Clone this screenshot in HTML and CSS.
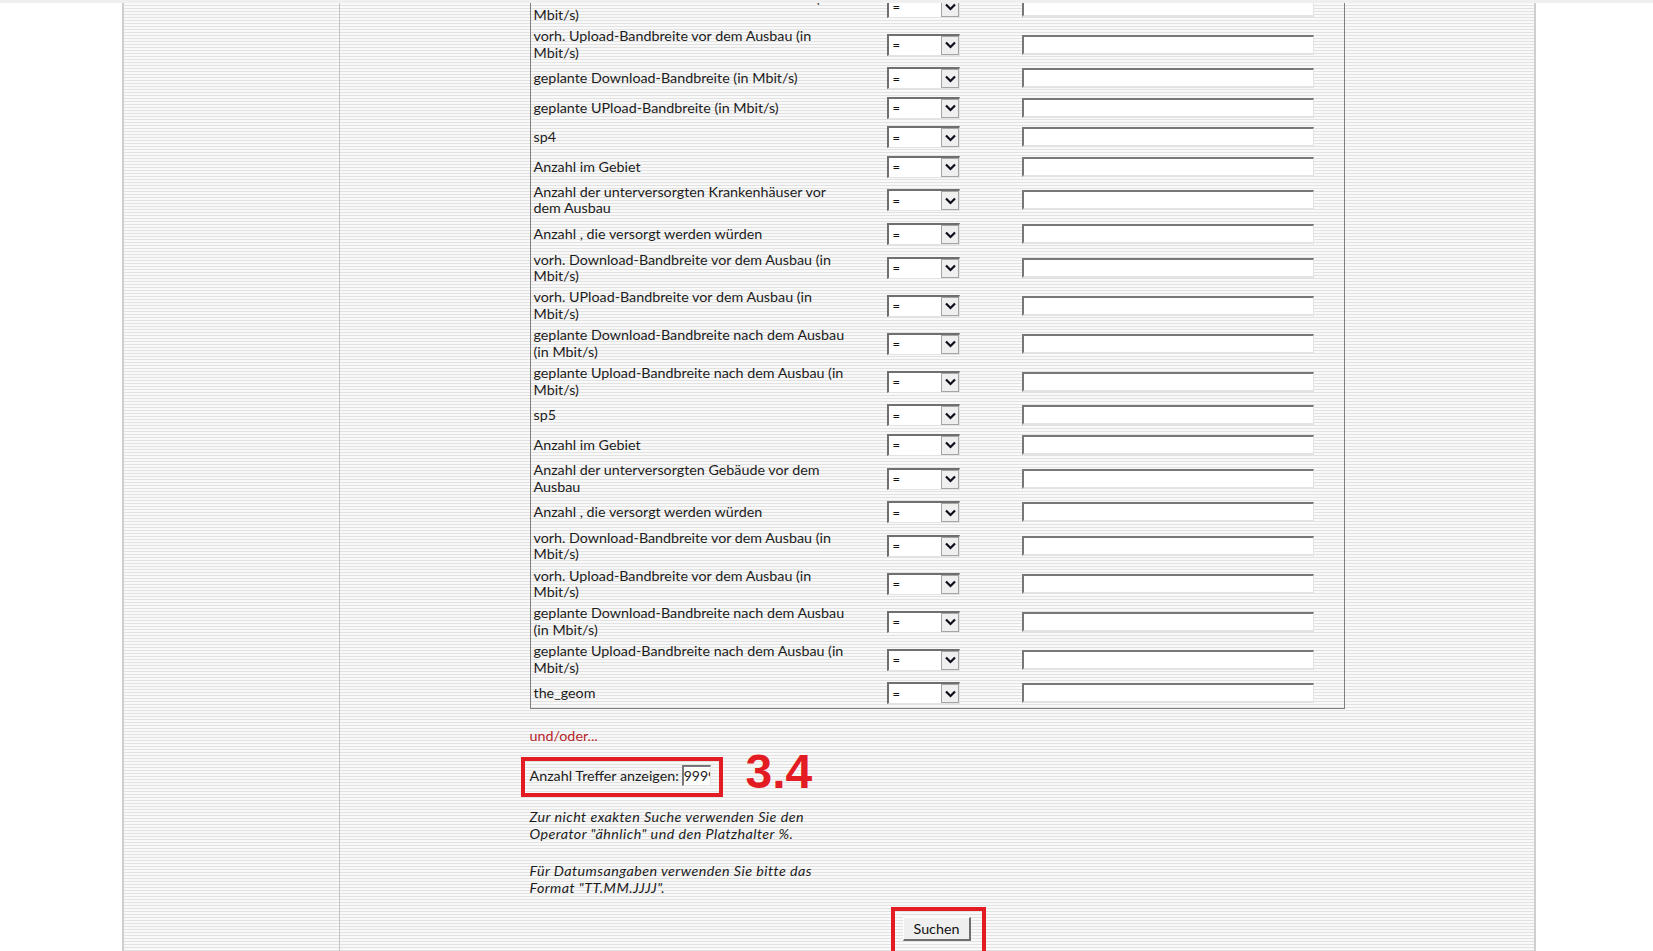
FILE: index.html
```html
<!DOCTYPE html>
<html lang="de">
<head>
<meta charset="utf-8">
<title>Suche</title>
<link rel="stylesheet" href="styles.css">
</head>
<body>
<div class="topbar"></div>
<div class="viewport">
  <div class="page">
    <aside class="sidebar"></aside>
    <main class="main">
      <form class="content">
        <table class="crit">
          <colgroup><col class="c-lbl"><col class="c-op"><col class="c-val"></colgroup>
          <tbody>
            <tr><td class="lbl">vorh. Download-Bandbreite vor dem Ausbau (in<br>Mbit/s)</td><td class="op"><span class="sel"><select><option>=</option></select><span class="arr"><svg width="11" height="8" viewBox="0 0 11 8"><path d="M1 1.5 L5.5 6 L10 1.5" fill="none" stroke="#0d0d1a" stroke-width="2.2"/></svg></span></span></td><td class="val"><input type="text"></td></tr>
            <tr><td class="lbl">vorh. Upload-Bandbreite vor dem Ausbau (in<br>Mbit/s)</td><td class="op"><span class="sel"><select><option>=</option></select><span class="arr"><svg width="11" height="8" viewBox="0 0 11 8"><path d="M1 1.5 L5.5 6 L10 1.5" fill="none" stroke="#0d0d1a" stroke-width="2.2"/></svg></span></span></td><td class="val"><input type="text"></td></tr>
            <tr><td class="lbl">geplante Download-Bandbreite (in Mbit/s)</td><td class="op"><span class="sel"><select><option>=</option></select><span class="arr"><svg width="11" height="8" viewBox="0 0 11 8"><path d="M1 1.5 L5.5 6 L10 1.5" fill="none" stroke="#0d0d1a" stroke-width="2.2"/></svg></span></span></td><td class="val"><input type="text"></td></tr>
            <tr><td class="lbl">geplante UPload-Bandbreite (in Mbit/s)</td><td class="op"><span class="sel"><select><option>=</option></select><span class="arr"><svg width="11" height="8" viewBox="0 0 11 8"><path d="M1 1.5 L5.5 6 L10 1.5" fill="none" stroke="#0d0d1a" stroke-width="2.2"/></svg></span></span></td><td class="val"><input type="text"></td></tr>
            <tr><td class="lbl">sp4</td><td class="op"><span class="sel"><select><option>=</option></select><span class="arr"><svg width="11" height="8" viewBox="0 0 11 8"><path d="M1 1.5 L5.5 6 L10 1.5" fill="none" stroke="#0d0d1a" stroke-width="2.2"/></svg></span></span></td><td class="val"><input type="text"></td></tr>
            <tr><td class="lbl">Anzahl im Gebiet</td><td class="op"><span class="sel"><select><option>=</option></select><span class="arr"><svg width="11" height="8" viewBox="0 0 11 8"><path d="M1 1.5 L5.5 6 L10 1.5" fill="none" stroke="#0d0d1a" stroke-width="2.2"/></svg></span></span></td><td class="val"><input type="text"></td></tr>
            <tr><td class="lbl">Anzahl der unterversorgten Krankenhäuser vor<br>dem Ausbau</td><td class="op"><span class="sel"><select><option>=</option></select><span class="arr"><svg width="11" height="8" viewBox="0 0 11 8"><path d="M1 1.5 L5.5 6 L10 1.5" fill="none" stroke="#0d0d1a" stroke-width="2.2"/></svg></span></span></td><td class="val"><input type="text"></td></tr>
            <tr><td class="lbl">Anzahl , die versorgt werden würden</td><td class="op"><span class="sel"><select><option>=</option></select><span class="arr"><svg width="11" height="8" viewBox="0 0 11 8"><path d="M1 1.5 L5.5 6 L10 1.5" fill="none" stroke="#0d0d1a" stroke-width="2.2"/></svg></span></span></td><td class="val"><input type="text"></td></tr>
            <tr><td class="lbl">vorh. Download-Bandbreite vor dem Ausbau (in<br>Mbit/s)</td><td class="op"><span class="sel"><select><option>=</option></select><span class="arr"><svg width="11" height="8" viewBox="0 0 11 8"><path d="M1 1.5 L5.5 6 L10 1.5" fill="none" stroke="#0d0d1a" stroke-width="2.2"/></svg></span></span></td><td class="val"><input type="text"></td></tr>
            <tr><td class="lbl">vorh. UPload-Bandbreite vor dem Ausbau (in<br>Mbit/s)</td><td class="op"><span class="sel"><select><option>=</option></select><span class="arr"><svg width="11" height="8" viewBox="0 0 11 8"><path d="M1 1.5 L5.5 6 L10 1.5" fill="none" stroke="#0d0d1a" stroke-width="2.2"/></svg></span></span></td><td class="val"><input type="text"></td></tr>
            <tr><td class="lbl">geplante Download-Bandbreite nach dem Ausbau<br>(in Mbit/s)</td><td class="op"><span class="sel"><select><option>=</option></select><span class="arr"><svg width="11" height="8" viewBox="0 0 11 8"><path d="M1 1.5 L5.5 6 L10 1.5" fill="none" stroke="#0d0d1a" stroke-width="2.2"/></svg></span></span></td><td class="val"><input type="text"></td></tr>
            <tr><td class="lbl">geplante Upload-Bandbreite nach dem Ausbau (in<br>Mbit/s)</td><td class="op"><span class="sel"><select><option>=</option></select><span class="arr"><svg width="11" height="8" viewBox="0 0 11 8"><path d="M1 1.5 L5.5 6 L10 1.5" fill="none" stroke="#0d0d1a" stroke-width="2.2"/></svg></span></span></td><td class="val"><input type="text"></td></tr>
            <tr><td class="lbl">sp5</td><td class="op"><span class="sel"><select><option>=</option></select><span class="arr"><svg width="11" height="8" viewBox="0 0 11 8"><path d="M1 1.5 L5.5 6 L10 1.5" fill="none" stroke="#0d0d1a" stroke-width="2.2"/></svg></span></span></td><td class="val"><input type="text"></td></tr>
            <tr><td class="lbl">Anzahl im Gebiet</td><td class="op"><span class="sel"><select><option>=</option></select><span class="arr"><svg width="11" height="8" viewBox="0 0 11 8"><path d="M1 1.5 L5.5 6 L10 1.5" fill="none" stroke="#0d0d1a" stroke-width="2.2"/></svg></span></span></td><td class="val"><input type="text"></td></tr>
            <tr><td class="lbl">Anzahl der unterversorgten Gebäude vor dem<br>Ausbau</td><td class="op"><span class="sel"><select><option>=</option></select><span class="arr"><svg width="11" height="8" viewBox="0 0 11 8"><path d="M1 1.5 L5.5 6 L10 1.5" fill="none" stroke="#0d0d1a" stroke-width="2.2"/></svg></span></span></td><td class="val"><input type="text"></td></tr>
            <tr><td class="lbl">Anzahl , die versorgt werden würden</td><td class="op"><span class="sel"><select><option>=</option></select><span class="arr"><svg width="11" height="8" viewBox="0 0 11 8"><path d="M1 1.5 L5.5 6 L10 1.5" fill="none" stroke="#0d0d1a" stroke-width="2.2"/></svg></span></span></td><td class="val"><input type="text"></td></tr>
            <tr><td class="lbl">vorh. Download-Bandbreite vor dem Ausbau (in<br>Mbit/s)</td><td class="op"><span class="sel"><select><option>=</option></select><span class="arr"><svg width="11" height="8" viewBox="0 0 11 8"><path d="M1 1.5 L5.5 6 L10 1.5" fill="none" stroke="#0d0d1a" stroke-width="2.2"/></svg></span></span></td><td class="val"><input type="text"></td></tr>
            <tr><td class="lbl">vorh. Upload-Bandbreite vor dem Ausbau (in<br>Mbit/s)</td><td class="op"><span class="sel"><select><option>=</option></select><span class="arr"><svg width="11" height="8" viewBox="0 0 11 8"><path d="M1 1.5 L5.5 6 L10 1.5" fill="none" stroke="#0d0d1a" stroke-width="2.2"/></svg></span></span></td><td class="val"><input type="text"></td></tr>
            <tr><td class="lbl">geplante Download-Bandbreite nach dem Ausbau<br>(in Mbit/s)</td><td class="op"><span class="sel"><select><option>=</option></select><span class="arr"><svg width="11" height="8" viewBox="0 0 11 8"><path d="M1 1.5 L5.5 6 L10 1.5" fill="none" stroke="#0d0d1a" stroke-width="2.2"/></svg></span></span></td><td class="val"><input type="text"></td></tr>
            <tr><td class="lbl">geplante Upload-Bandbreite nach dem Ausbau (in<br>Mbit/s)</td><td class="op"><span class="sel"><select><option>=</option></select><span class="arr"><svg width="11" height="8" viewBox="0 0 11 8"><path d="M1 1.5 L5.5 6 L10 1.5" fill="none" stroke="#0d0d1a" stroke-width="2.2"/></svg></span></span></td><td class="val"><input type="text"></td></tr>
            <tr><td class="lbl">the_geom</td><td class="op"><span class="sel"><select><option>=</option></select><span class="arr"><svg width="11" height="8" viewBox="0 0 11 8"><path d="M1 1.5 L5.5 6 L10 1.5" fill="none" stroke="#0d0d1a" stroke-width="2.2"/></svg></span></span></td><td class="val"><input type="text"></td></tr>
          </tbody>
        </table>

        <p class="more"><a class="more-link" href="#">und/oder...</a></p>

        <div class="treffer">
          <label class="treffer-lbl" for="anz">Anzahl Treffer anzeigen:</label>
          <input class="treffer-in" id="anz" type="text" value="9999">
          <span class="mark-box treffer-box"></span>
          <span class="mark-num">3.4</span>
        </div>

        <p class="hint">Zur nicht exakten Suche verwenden Sie den<br>Operator "ähnlich" und den Platzhalter %.</p>
        <p class="hint hint-2">Für Datumsangaben verwenden Sie bitte das<br>Format "TT.MM.JJJJ".</p>

        <div class="submit">
          <span class="submit-wrap">
            <button class="btn" type="button">Suchen</button>
            <span class="mark-box submit-box"></span>
          </span>
        </div>
      </form>
    </main>
  </div>
</div>
</body>
</html>
```

FILE: styles.css
```css
* { box-sizing: border-box; }

html, body {
  margin: 0;
  padding: 0;
  background: #ffffff;
}

body {
  font-family: Lato, "Liberation Sans", sans-serif;
  font-size: 14.3px;
  color: #1c1c1c;
  overflow: hidden;
}

.topbar {
  height: 3px;
  background: #efefef;
}

.viewport {
  height: 948px;
  overflow: hidden;
}

.page {
  display: flex;
  width: 1414px;
  height: 100%;
  margin-left: 122px;
  border-left: 2px solid #cfcfcf;
  border-right: 2px solid #cfcfcf;
  background: repeating-linear-gradient(to bottom, #f9f9f9 0, #f9f9f9 2px, #e2e2e2 2px, #e2e2e2 3px);
}

.sidebar {
  flex: none;
  width: 216px;
  border-right: 1px solid #c4c4c4;
}

.main {
  flex: 1;
}

.content {
  width: 815px;
  margin: 0 auto;
}

/* criteria table */
.crit {
  width: 815px;
  border-collapse: collapse;
  table-layout: fixed;
  border: 1px solid #7f7f7f;
  margin-top: -16.3px;
}

.c-lbl { width: 354px; }
.c-op  { width: 134px; }
.c-val { width: 325px; }

.crit td {
  padding: 2.67px 3px;
  vertical-align: middle;
  line-height: 16.3px;
}

.lbl { white-space: nowrap; }

.sel {
  position: relative;
  display: inline-block;
  vertical-align: middle;
  margin: 1.1px 0;
}

.sel select {
  display: block;
  width: 73px;
  height: 22px;
  margin: 0;
  padding: 0 0 0 3px;
  -webkit-appearance: none;
  appearance: none;
  border-style: solid;
  border-width: 2px 1px 1px 2px;
  border-color: #6f6f6f #e3e3e3 #e3e3e3 #6f6f6f;
  border-radius: 0;
  background: #ffffff;
  font-family: Lato, "Liberation Sans", sans-serif;
  font-size: 13px;
  color: #111111;
}

.arr {
  position: absolute;
  right: 1px;
  top: 2px;
  width: 18px;
  height: 19px;
  display: flex;
  align-items: center;
  justify-content: center;
  background: #efefef;
  border: 1px solid #a5a5a5;
  pointer-events: none;
}

.val input {
  display: block;
  width: 292px;
  height: 20px;
  margin: 0;
  padding: 0;
  border-style: solid;
  border-width: 2px 1px 2px 2px;
  border-color: #777777 #e3e3e3 #e3e3e3 #777777;
  background: #ffffff;
}

/* below table */
.more {
  margin: 18.5px 0 0;
  line-height: 16.3px;
}

.more-link {
  color: #b5262b;
  text-decoration: none;
}

.treffer {
  position: relative;
  display: flex;
  align-items: center;
  gap: 3px;
  height: 21px;
  margin-top: 21px;
}

.treffer-lbl {
  line-height: 16.3px;
  padding-top: 2px;
}

.treffer-in {
  width: 29px;
  height: 21px;
  margin: 0;
  padding: 0;
  border-style: solid;
  border-width: 2px 1px 1px 2px;
  border-color: #777777 #e3e3e3 #e3e3e3 #777777;
  background: #ffffff;
  font-family: Lato, "Liberation Sans", sans-serif;
  font-size: 14px;
  color: #1c1c1c;
}

.mark-box {
  position: absolute;
  border: 4px solid #e31b23;
  pointer-events: none;
}

.treffer-box {
  left: -9px;
  top: -8px;
  width: 202px;
  height: 40px;
}

.mark-num {
  position: absolute;
  left: 216px;
  top: -17px;
  font-family: "Liberation Sans", Arial, sans-serif;
  font-weight: bold;
  font-size: 48px;
  line-height: 48px;
  color: #e31b23;
}

.hint {
  margin: 23.5px 0 0;
  font-style: italic;
  letter-spacing: 0.45px;
  line-height: 16.3px;
}

.hint-2 {
  margin-top: 21.4px;
}

.submit {
  margin-top: 21.5px;
  text-align: center;
}

.submit-wrap {
  position: relative;
  display: inline-block;
}

.btn {
  display: block;
  width: 68px;
  height: 24px;
  margin: 0;
  padding: 0;
  border-style: solid;
  border-width: 1px 2px 2px 1px;
  border-color: #ffffff #6e6e6e #6e6e6e #ffffff;
  background: #efefef;
  font-family: Lato, "Liberation Sans", sans-serif;
  font-size: 14.3px;
  color: #111111;
}

.submit-box {
  left: -12px;
  top: -10px;
  width: 95px;
  height: 52px;
}
```
